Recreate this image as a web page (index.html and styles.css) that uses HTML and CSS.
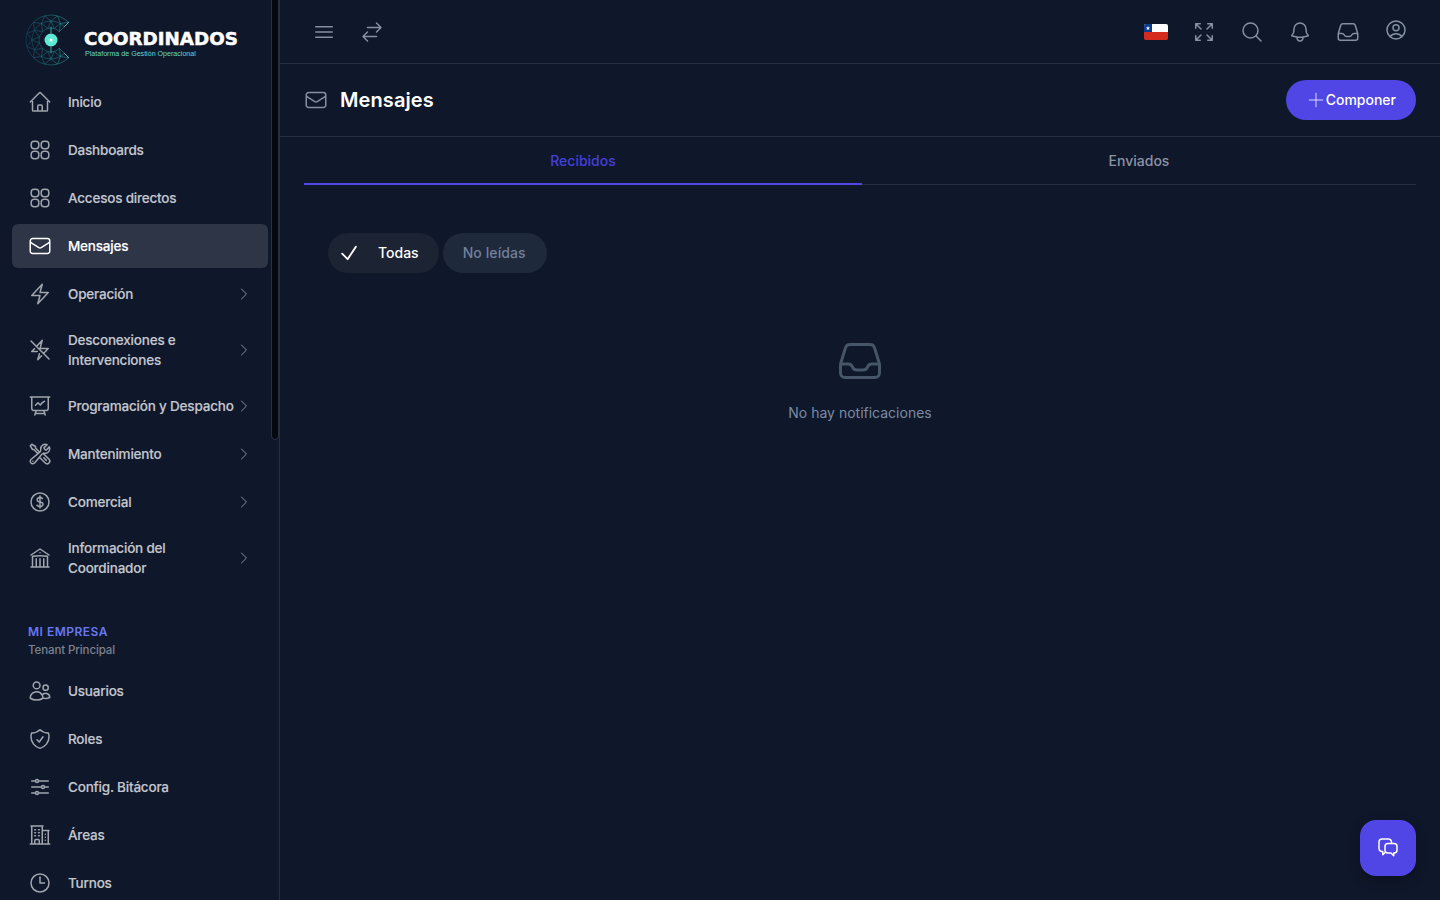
FILE: index.html
```html
<!DOCTYPE html>
<html lang="es">
<head>
    <meta charset="UTF-8">
    <title>Coordinados - Mensajes</title>
    <link rel="stylesheet" href="styles.css">
</head>
<body>
    <!-- Icon set -->
    <svg class="icon-defs" aria-hidden="true">
        <symbol id="i-home" viewBox="0 0 24 24"><path d="M2.25 12l8.954-8.955c.44-.439 1.152-.439 1.591 0L21.75 12M4.5 9.75v10.125c0 .621.504 1.125 1.125 1.125H9.75v-4.875c0-.621.504-1.125 1.125-1.125h2.25c.621 0 1.125.504 1.125 1.125V21h4.125c.621 0 1.125-.504 1.125-1.125V9.75M8.25 21h8.25"/></symbol>
        <symbol id="i-grid" viewBox="0 0 24 24"><rect x="3.2" y="3.2" width="7.6" height="7.6" rx="3"/><rect x="13.2" y="3.2" width="7.6" height="7.6" rx="3"/><rect x="3.2" y="13.2" width="7.6" height="7.6" rx="3"/><rect x="13.2" y="13.2" width="7.6" height="7.6" rx="3"/></symbol>
        <symbol id="i-mail" viewBox="0 0 24 24"><path d="M21.75 6.75v10.5a2.25 2.25 0 01-2.25 2.25h-15a2.25 2.25 0 01-2.25-2.25V6.75m19.5 0A2.25 2.25 0 0019.5 4.5h-15a2.25 2.25 0 00-2.25 2.25m19.5 0v.243a2.25 2.25 0 01-1.07 1.916l-7.5 4.615a2.25 2.25 0 01-2.36 0L3.32 8.91a2.25 2.25 0 01-1.07-1.916V6.75"/></symbol>
        <symbol id="i-bolt" viewBox="0 0 24 24"><path d="M3.75 13.5l10.5-11.25L12 10.5h8.25L9.75 21.75 12 13.5H3.75z"/></symbol>
        <symbol id="i-bolt-slash" viewBox="0 0 24 24"><path d="M11.412 15.655L9.75 21.75l3.745-4.012M9.257 13.5H3.75l2.659-2.849m2.048-2.194L14.25 2.25 12 10.5h8.25l-4.707 5.043M8.457 8.457L3 3m5.457 5.457l7.086 7.086m0 0L21 21"/></symbol>
        <symbol id="i-chart" viewBox="0 0 24 24"><path d="M3.75 3v11.25A2.25 2.25 0 006 16.5h2.25M3.75 3h-1.5m1.5 0h16.5m0 0h1.5m-1.5 0v11.25A2.25 2.25 0 0118 16.5h-2.25m-7.5 0h7.5m-7.5 0l-1 3m8.5-3l1 3m0 0l.5 1.5m-.5-1.5h-9.5m0 0l-.5 1.5M7.5 11.25L10 8.75l2.25 2.25c1-1.6 2.4-2.9 4.25-3.75"/></symbol>
        <symbol id="i-tools" viewBox="0 0 24 24"><path d="M11.42 15.17L17.25 21A2.652 2.652 0 0021 17.25l-5.877-5.877M11.42 15.17l2.496-3.03c.317-.384.74-.626 1.208-.766M11.42 15.17l-4.655 5.653a2.548 2.548 0 11-3.586-3.586l6.837-5.63m5.108-.233c.55-.164 1.163-.188 1.743-.14a4.5 4.5 0 004.486-6.336l-3.276 3.277a3.004 3.004 0 01-2.25-2.25l3.276-3.276a4.5 4.5 0 00-6.336 4.486c.091 1.076-.071 2.264-.904 2.95l-.102.085m-1.745 1.437L5.909 7.5H4.5L2.25 3.75l1.5-1.5L7.5 4.5v1.409l4.26 4.26m-1.745 1.437l1.745-1.437m6.615 8.206L15.75 15.75M4.867 19.125h.008v.008h-.008v-.008z"/></symbol>
        <symbol id="i-dollar" viewBox="0 0 24 24"><path d="M12 6v12m-3-2.818l.879.659c1.171.879 3.07.879 4.242 0 1.172-.879 1.172-2.303 0-3.182C13.536 12.219 12.768 12 12 12c-.725 0-1.45-.22-2.003-.659-1.106-.879-1.106-2.303 0-3.182s2.9-.879 4.006 0l.415.33M21 12a9 9 0 11-18 0 9 9 0 0118 0z"/></symbol>
        <symbol id="i-bank" viewBox="0 0 24 24"><path d="M12 21v-8.25M15.75 21v-8.25M8.25 21v-8.25M3 9l9-6 9 6m-1.5 12V10.332A48.36 48.36 0 0012 9.75c-2.551 0-5.056.2-7.5.582V21M3 21h18M12 6.75h.008v.008H12V6.75z"/></symbol>
        <symbol id="i-users" viewBox="0 0 24 24"><path d="M15 19.128a9.38 9.38 0 002.625.372 9.337 9.337 0 004.121-.952 4.125 4.125 0 00-7.533-2.493M15 19.128v-.003c0-1.113-.285-2.16-.786-3.07M15 19.128v.106A12.318 12.318 0 018.624 21c-2.331 0-4.512-.645-6.374-1.766l-.001-.109a6.375 6.375 0 0111.964-3.07M12 6.375a3.375 3.375 0 11-6.75 0 3.375 3.375 0 016.75 0zm8.25 2.25a2.625 2.625 0 11-5.25 0 2.625 2.625 0 015.25 0z"/></symbol>
        <symbol id="i-shield" viewBox="0 0 24 24"><path d="M9 12.75L11.25 15 15 9.75m-3-7.036A11.959 11.959 0 013.598 6 11.99 11.99 0 003 9.749c0 5.592 3.824 10.29 9 11.623 5.176-1.332 9-6.03 9-11.622 0-1.31-.21-2.571-.598-3.751h-.152c-3.196 0-6.1-1.248-8.25-3.285z"/></symbol>
        <symbol id="i-sliders" viewBox="0 0 24 24"><path d="M10.5 6h9.75M10.5 6a1.5 1.5 0 11-3 0m3 0a1.5 1.5 0 10-3 0M3.75 6H7.5m3 12h9.75m-9.75 0a1.5 1.5 0 01-3 0m3 0a1.5 1.5 0 00-3 0m-3.75 0H7.5m9-6h3.75m-3.75 0a1.5 1.5 0 01-3 0m3 0a1.5 1.5 0 00-3 0m-9.75 0h9.75"/></symbol>
        <symbol id="i-building" viewBox="0 0 24 24"><path d="M2.25 21h19.5m-18-18v18m10.5-18v18m6-13.5V21M6.75 6.75h.75m-.75 3h.75m-.75 3h.75m3-6h.75m-.75 3h.75m-.75 3h.75M6.75 21v-3.375c0-.621.504-1.125 1.125-1.125h2.25c.621 0 1.125.504 1.125 1.125V21M3 3h12m-.75 4.5H21m-3.75 3.75h.008v.008h-.008v-.008zm0 3h.008v.008h-.008v-.008zm0 3h.008v.008h-.008v-.008z"/></symbol>
        <symbol id="i-clock" viewBox="0 0 24 24"><path d="M12 6v6h4.5m4.5 0a9 9 0 11-18 0 9 9 0 0118 0z"/></symbol>
        <symbol id="i-chevron" viewBox="0 0 24 24"><path d="M8.25 4.5l7.5 7.5-7.5 7.5"/></symbol>
        <symbol id="i-inbox" viewBox="0 0 24 24"><path d="M2.25 13.5h3.86a2.25 2.25 0 012.012 1.244l.256.512a2.25 2.25 0 002.013 1.244h3.218a2.25 2.25 0 002.013-1.244l.256-.512a2.25 2.25 0 012.013-1.244h3.859m-19.5.338V18a2.25 2.25 0 002.25 2.25h15A2.25 2.25 0 0021.75 18v-4.162c0-.224-.034-.447-.1-.661L19.24 5.338a2.25 2.25 0 00-2.15-1.588H6.911a2.25 2.25 0 00-2.15 1.588L2.35 13.177a2.25 2.25 0 00-.1.661z"/></symbol>
    </svg>

    <!-- Sidebar -->
    <aside class="sidebar">
        <div class="brand">
            <svg class="brand-mark" viewBox="0 0 52 52">
                <defs>
                    <linearGradient id="meshFade" gradientUnits="userSpaceOnUse" x1="0" y1="0" x2="46" y2="0">
                        <stop offset="0" stop-color="#135068"/>
                        <stop offset="1" stop-color="#2fb3b0"/>
                    </linearGradient>
                </defs>
                <g class="mesh">
                    <path d="M43.7 8.3A25 25 0 1 0 43.7 43.700"/>
                    <path d="M39.400 12.600A19 19 0 1 0 39.400 39.400"/>
                    <path d="M34.500 17.500A12 12 0 1 0 34.500 34.500"/>
                    <path d="M43.7 8.300L34.500 17.500M43.7 43.700L34.500 34.500"/>
                    <path d="M43.7 8.300L35.500 9.500 32.500 1.900 26 7 19.500 1.900 16.500 9.500 8.300 8.300 9.500 16.500 1.900 19.500 7 26 1.900 32.500 9.500 35.500 8.300 43.700 16.500 42.500 19.500 50.100 26 45 32.500 50.100 35.500 42.500 43.700 43.700"/>
                    <path d="M34.500 17.500L35.500 9.500 29.100 14.400 26 7 22.900 14.400 16.500 9.500 17.500 17.500 9.500 16.500 14.400 22.900 7 26 14.400 29.100 9.500 35.500 17.500 34.500 16.500 42.500 22.900 37.600 26 45 29.100 37.600 35.500 42.500 34.500 34.500"/>
                </g>
                <path class="mesh-bright" d="M26 13v6M26 33v6M43.700 8.300l-4.300 4.300M43.700 43.700l-4.300-4.300"/>
                <circle class="mesh-core" cx="26" cy="26" r="6.500"/>
                <circle class="mesh-dot" cx="26" cy="26" r="1.600"/>
            </svg>
            <div class="brand-text">
                <div class="brand-name">COORDINADOS</div>
                <div class="brand-tag">Plataforma de Gestión Operacional</div>
            </div>
        </div>

        <nav class="nav">
            <a class="nav-item"><svg class="nav-icon"><use href="#i-home"/></svg><span class="nav-label">Inicio</span></a>
            <a class="nav-item"><svg class="nav-icon"><use href="#i-grid"/></svg><span class="nav-label">Dashboards</span></a>
            <a class="nav-item"><svg class="nav-icon"><use href="#i-grid"/></svg><span class="nav-label">Accesos directos</span></a>
            <a class="nav-item active"><svg class="nav-icon"><use href="#i-mail"/></svg><span class="nav-label">Mensajes</span></a>
            <a class="nav-item"><svg class="nav-icon"><use href="#i-bolt"/></svg><span class="nav-label">Operación</span><svg class="nav-chevron"><use href="#i-chevron"/></svg></a>
            <a class="nav-item tall"><svg class="nav-icon"><use href="#i-bolt-slash"/></svg><span class="nav-label">Desconexiones e<br>Intervenciones</span><svg class="nav-chevron"><use href="#i-chevron"/></svg></a>
            <a class="nav-item"><svg class="nav-icon"><use href="#i-chart"/></svg><span class="nav-label">Programación y Despacho</span><svg class="nav-chevron"><use href="#i-chevron"/></svg></a>
            <a class="nav-item"><svg class="nav-icon"><use href="#i-tools"/></svg><span class="nav-label">Mantenimiento</span><svg class="nav-chevron"><use href="#i-chevron"/></svg></a>
            <a class="nav-item"><svg class="nav-icon"><use href="#i-dollar"/></svg><span class="nav-label">Comercial</span><svg class="nav-chevron"><use href="#i-chevron"/></svg></a>
            <a class="nav-item tall"><svg class="nav-icon"><use href="#i-bank"/></svg><span class="nav-label">Información del<br>Coordinador</span><svg class="nav-chevron"><use href="#i-chevron"/></svg></a>

            <div class="nav-section">
                <div class="nav-section-title">MI EMPRESA</div>
                <div class="nav-section-sub">Tenant Principal</div>
            </div>

            <a class="nav-item"><svg class="nav-icon"><use href="#i-users"/></svg><span class="nav-label">Usuarios</span></a>
            <a class="nav-item"><svg class="nav-icon"><use href="#i-shield"/></svg><span class="nav-label">Roles</span></a>
            <a class="nav-item"><svg class="nav-icon"><use href="#i-sliders"/></svg><span class="nav-label">Config. Bitácora</span></a>
            <a class="nav-item"><svg class="nav-icon"><use href="#i-building"/></svg><span class="nav-label">Áreas</span></a>
            <a class="nav-item"><svg class="nav-icon"><use href="#i-clock"/></svg><span class="nav-label">Turnos</span></a>
        </nav>
        <div class="scroll-thumb"></div>
    </aside>

    <!-- Main area -->
    <main class="main">
        <header class="topbar">
            <div class="topbar-group">
                <button class="top-btn"><svg class="top-icon" viewBox="0 0 24 24"><path d="M3.75 6.75h16.5M3.75 12h16.5m-16.5 5.25h16.5"/></svg></button>
                <button class="top-btn"><svg class="top-icon" viewBox="0 0 24 24"><path d="M7.5 21L3 16.5m0 0L7.5 12M3 16.5h13.5m0-13.5L21 7.5m0 0L16.5 12M21 7.5H7.5"/></svg></button>
            </div>
            <div class="topbar-group">
                <button class="top-btn">
                    <svg class="flag" viewBox="0 0 24 16">
                        <rect width="24" height="8" fill="#fff"/>
                        <rect y="8" width="24" height="8" fill="#d52b1e"/>
                        <rect width="8" height="8" fill="#0b3a8f"/>
                        <path d="M4 2l.6 1.4 1.5.1-1.1 1 .3 1.500L4 5.200 2.700 6l.3-1.500-1.100-1 1.500-.1z" fill="#fff"/>
                    </svg>
                </button>
                <button class="top-btn"><svg class="top-icon" viewBox="0 0 24 24"><path d="M3.750 3.750v4.500m0-4.500h4.500m-4.500 0L9 9M3.750 20.250v-4.500m0 4.500h4.500m-4.500 0L9 15M20.250 3.750h-4.500m4.500 0v4.500m0-4.500L15 9m5.250 11.250h-4.500m4.500 0v-4.500m0 4.500L15 15"/></svg></button>
                <button class="top-btn"><svg class="top-icon" viewBox="0 0 24 24"><path d="M21 21l-5.197-5.197m0 0A7.500 7.500 0 105.196 5.196a7.500 7.500 0 0010.607 10.607z"/></svg></button>
                <button class="top-btn"><svg class="top-icon" viewBox="0 0 24 24"><path d="M14.857 17.082a23.848 23.848 0 005.454-1.310A8.967 8.967 0 0118 9.750v-.7V9A6 6 0 006 9v.75a8.967 8.967 0 01-2.312 6.022c1.733.64 3.560 1.085 5.455 1.310m5.714 0a24.255 24.255 0 01-5.714 0m5.714 0a3 3 0 11-5.714 0"/></svg></button>
                <button class="top-btn"><svg class="top-icon"><use href="#i-inbox"/></svg></button>
                <button class="top-btn raised"><svg class="top-icon" viewBox="0 0 24 24"><path d="M17.982 18.725A7.488 7.488 0 0012 15.750a7.488 7.488 0 00-5.982 2.975m11.963 0a9 9 0 10-11.963 0m11.963 0A8.966 8.966 0 0112 21a8.966 8.966 0 01-5.982-2.275M15 9.750a3 3 0 11-6 0 3 3 0 016 0z"/></svg></button>
            </div>
        </header>

        <section class="page-head">
            <div class="page-title">
                <svg class="page-icon"><use href="#i-mail"/></svg>
                <h1>Mensajes</h1>
            </div>
            <button class="compose-btn">
                <svg class="compose-plus" viewBox="0 0 24 24"><path d="M12 3v18m9-9H3"/></svg>
                <span class="compose-text">Componer</span>
            </button>
        </section>

        <div class="tabs">
            <div class="tab active">Recibidos</div>
            <div class="tab">Enviados</div>
        </div>

        <div class="filters">
            <button class="chip selected">
                <svg class="chip-check" viewBox="0 0 24 24"><path d="M4.500 12.750l6 6 9-13.500"/></svg>
                <span class="chip-text">Todas</span>
            </button>
            <button class="chip"><span class="chip-text">No leídas</span></button>
        </div>

        <div class="empty">
            <svg class="empty-icon"><use href="#i-inbox"/></svg>
            <p>No hay notificaciones</p>
        </div>
    </main>

    <button class="fab">
        <svg class="fab-icon" viewBox="0 0 24 24">
            <path d="M15.500 6.500V6a3 3 0 00-3-3H6a3 3 0 00-3 3v6.500a3 3 0 003 3h.8v3.300l2.400-2.300"/>
            <path d="M12 7.500h6a3 3 0 013 3v3.500a3 3 0 01-3 3h-.3v2.700L15 17h-3a3 3 0 01-3-3v-3.500a3 3 0 013-3z"/>
        </svg>
    </button>
</body>
</html>
```

FILE: styles.css
```css
* {
    margin: 0;
    padding: 0;
    box-sizing: border-box;
    font-family: Inter, "Noto Sans", sans-serif;
}

body {
    background-color: #0f172a;
    display: flex;
    height: 100vh;
    overflow: hidden;
}

button {
    border: none;
    background: none;
    cursor: pointer;
}

svg {
    fill: none;
    stroke: currentColor;
    stroke-linecap: round;
    stroke-linejoin: round;
}

.icon-defs {
    display: none;
}

/* Sidebar */
.sidebar {
    position: relative;
    width: 280px;
    flex-shrink: 0;
    height: 100vh;
    overflow: hidden;
    border-right: 1px solid #262e3f;
}

.scroll-thumb {
    position: absolute;
    top: -4px;
    right: 0;
    width: 8px;
    height: 444px;
    background-color: #05080f;
    border: 1px solid #2a3142;
    border-radius: 4px;
}

.brand {
    display: flex;
    align-items: center;
    height: 80px;
    padding-left: 25px;
}

.brand-mark {
    width: 52px;
    height: 52px;
    margin-right: 7px;
    flex-shrink: 0;
}

.mesh {
    stroke: url(#meshFade);
    stroke-width: 0.5;
}

.mesh-bright {
    color: #43c9c0;
    stroke-width: 0.8;
}

.mesh-core {
    fill: #5eead4;
    stroke: none;
}

.mesh-dot {
    fill: #fff;
    stroke: none;
}

.brand-text {
    margin-top: 6px;
}

.brand-name {
    font-family: "DejaVu Sans", sans-serif;
    font-weight: 700;
    font-size: 18.300px;
    line-height: 22px;
    color: #fff;
    -webkit-text-stroke: 0.5px #fff;
    white-space: nowrap;
}

.brand-tag {
    font-family: "Liberation Sans", sans-serif;
    font-size: 7.100px;
    line-height: 8px;
    margin-left: 1px;
    color: #62d8d0;
    white-space: nowrap;
}

.nav {
    display: flex;
    flex-direction: column;
    gap: 4px;
    padding: 0 11px 0 12px;
}

.nav-item {
    display: flex;
    align-items: center;
    height: 44px;
    padding-left: 16px;
    padding-right: 16px;
    border-radius: 6px;
    color: #c2c6ce;
    flex-shrink: 0;
}

.nav-item.tall {
    height: 60px;
}

.nav-item.active {
    background-color: #2e3546;
    color: #fff;
}

.nav-icon {
    width: 24px;
    height: 24px;
    margin-right: 16px;
    color: #a0a5ae;
    stroke-width: 1.500;
    flex-shrink: 0;
}

.nav-item.active .nav-icon {
    color: #fff;
}

.nav-label {
    font-size: 13.500px;
    font-weight: 500;
    line-height: 20px;
    letter-spacing: -0.2px;
    -webkit-text-stroke: 0.15px currentColor;
    flex-grow: 1;
    white-space: nowrap;
}

.nav-chevron {
    width: 16px;
    height: 16px;
    color: #8a909b;
    stroke-width: 1.500;
    flex-shrink: 0;
}

.nav-section {
    height: 73px;
    padding: 31px 4px 0 16px;
}

.nav-section-title {
    font-size: 12px;
    font-weight: 600;
    line-height: 18px;
    letter-spacing: 0.5px;
    color: #6877f4;
}

.nav-section-sub {
    font-size: 11.500px;
    font-weight: 500;
    line-height: 18px;
    letter-spacing: -0.1px;
    color: #7d8391;
}

/* Main area */
.main {
    flex-grow: 1;
    min-width: 0;
    display: flex;
    flex-direction: column;
}

.topbar {
    display: flex;
    justify-content: space-between;
    align-items: center;
    height: 64px;
    padding: 0 20px;
    border-bottom: 1px solid #262e3f;
}

.topbar-group {
    display: flex;
}

.top-btn {
    width: 48px;
    height: 48px;
    display: flex;
    align-items: center;
    justify-content: center;
    color: #8490a3;
}

.top-btn.raised {
    padding-bottom: 4px;
}

.top-icon {
    width: 24px;
    height: 24px;
    stroke-width: 1.500;
}

.flag {
    width: 24px;
    height: 16px;
    border-radius: 2px;
    stroke: none;
}

.page-head {
    display: flex;
    justify-content: space-between;
    align-items: center;
    height: 73px;
    padding: 0 24px;
    border-bottom: 1px solid #262e3f;
}

.page-title {
    display: flex;
    align-items: center;
    gap: 12px;
}

.page-icon {
    width: 24px;
    height: 24px;
    color: #8490a3;
    stroke-width: 1.500;
}

.page-title h1 {
    font-size: 20px;
    font-weight: 600;
    letter-spacing: 0.1px;
    color: #fff;
}

.compose-btn {
    display: flex;
    align-items: center;
    height: 40px;
    padding: 0 20px 0 21px;
    gap: 1px;
    border-radius: 20px;
    background-color: #4f46e5;
    color: #fff;
    font-size: 14px;
    font-weight: 500;
}

.compose-text {
    margin-top: -2px;
}

.compose-plus {
    width: 18px;
    height: 18px;
    stroke-width: 1.300;
    color: #e0defc;
}

.tabs {
    display: grid;
    grid-template-columns: 558px 1fr;
    height: 48px;
    margin: 0 24px;
    border-bottom: 1px solid #262e3f;
}

.tab {
    height: 47px;
    display: flex;
    align-items: center;
    justify-content: center;
    font-size: 14px;
    font-weight: 500;
    color: #8b94a5;
}

.tab.active {
    color: #4540dc;
    border-bottom: 2px solid #4f46e5;
    height: 48px;
}

.filters {
    display: flex;
    gap: 4px;
    padding: 48px 0 0 48px;
}

.chip {
    height: 40px;
    padding: 0 21px 0 20px;
    border-radius: 20px;
    display: flex;
    align-items: center;
    background-color: #1e293b;
    color: #728098;
    font-size: 14px;
    font-weight: 500;
    letter-spacing: 0.1px;
}

.chip-text {
    margin-top: -2px;
}

.chip.selected {
    background-color: #1c2333;
    color: #fff;
    padding: 0 20px 0 10px;
    letter-spacing: 0;
}

.chip-check {
    width: 22px;
    height: 22px;
    stroke-width: 2;
    margin-right: 18px;
}

.empty {
    display: flex;
    flex-direction: column;
    align-items: center;
    margin: 64px 24px 0;
    text-align: center;
}

.empty-icon {
    width: 48px;
    height: 48px;
    color: #475569;
    stroke-width: 1.500;
}

.empty p {
    margin-top: 19px;
    font-size: 14px;
    color: #7a8ba5;
}

/* Chat button */
.fab {
    position: fixed;
    right: 24px;
    bottom: 24px;
    width: 56px;
    height: 56px;
    border-radius: 16px;
    background-color: #4f46e5;
    color: #fff;
    display: flex;
    align-items: center;
    justify-content: center;
    box-shadow: 0 4px 12px rgba(0, 0, 0, 0.3);
}

.fab-icon {
    width: 24px;
    height: 24px;
    stroke-width: 1.500;
}
```
